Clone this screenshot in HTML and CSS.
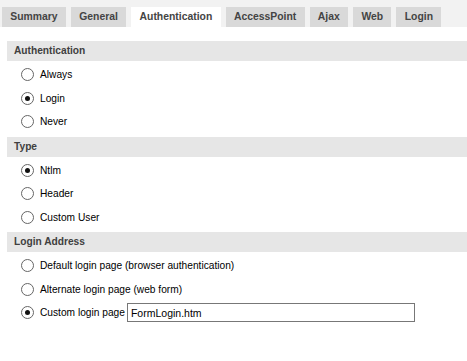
FILE: index.html
```html
<!DOCTYPE html>
<html>
<head>
<meta charset="utf-8">
<link rel="stylesheet" href="styles.css">
</head>
<body>
<div class="tabbar">
  <div class="tab">Summary</div>
  <div class="tab">General</div>
  <div class="tab active">Authentication</div>
  <div class="tab">AccessPoint</div>
  <div class="tab">Ajax</div>
  <div class="tab">Web</div>
  <div class="tab">Login</div>
</div>
<div class="content">
  <div class="section">
    <div class="header">Authentication</div>
    <div class="rows">
      <label class="row"><input type="radio" name="auth"> Always</label>
      <label class="row"><input type="radio" name="auth" checked> Login</label>
      <label class="row"><input type="radio" name="auth"> Never</label>
    </div>
  </div>
  <div class="section">
    <div class="header">Type</div>
    <div class="rows">
      <label class="row"><input type="radio" name="type" checked> Ntlm</label>
      <label class="row"><input type="radio" name="type"> Header</label>
      <label class="row"><input type="radio" name="type"> Custom User</label>
    </div>
  </div>
  <div class="section">
    <div class="header">Login Address</div>
    <div class="rows">
      <label class="row"><input type="radio" name="addr"> Default login page (browser authentication)</label>
      <label class="row"><input type="radio" name="addr"> Alternate login page (web form)</label>
      <label class="row"><input type="radio" name="addr" checked> Custom login page <input class="text" type="text" value="FormLogin.htm"></label>
    </div>
  </div>
</div>
</body>
</html>
```
FILE: styles.css
```css
html, body {
  margin: 0;
  padding: 0;
  background: #ffffff;
}
body {
  font-family: "Liberation Sans", Arial, sans-serif;
  font-size: 10.2px;
  color: #000;
}
.tabbar {
  display: flex;
  gap: 5px;
  background: #f2f2f2;
  height: 20px;
  padding: 7px 0 0 2px;
}
.tab {
  background: #d9d9d9;
  color: #444;
  font-weight: bold;
  font-size: 10.4px;
  line-height: 20px;
  padding: 0 8.3px;
}
.tab.active {
  background: #ffffff;
}
.content {
  padding: 14px 0 0 7px;
}
.header {
  background: #e6e6e6;
  color: #404040;
  font-weight: bold;
  height: 20px;
  line-height: 20px;
  padding-left: 7px;
}
.rows {
  display: flex;
  flex-direction: column;
  padding: 2px 0 3px 0;
}
.row {
  display: flex;
  align-items: center;
  height: 23.5px;
  padding-left: 14px;
  gap: 6px;
}
input[type="radio"] {
  appearance: none;
  -webkit-appearance: none;
  margin: 0;
  width: 13px;
  height: 13px;
  border: 1px solid #666;
  border-radius: 50%;
  background: #fff;
  box-sizing: border-box;
  display: grid;
  place-content: center;
}
input[type="radio"]:checked::before {
  content: "";
  width: 5px;
  height: 5px;
  border-radius: 50%;
  background: #111;
}
.text {
  font-family: "Liberation Sans", Arial, sans-serif;
  font-size: 10.5px;
  width: 288px;
  height: 19px;
  box-sizing: border-box;
  border: 1px solid #777;
  padding: 0 3px;
  margin: 0 0 0 -4px;
  outline: none;
}
```
